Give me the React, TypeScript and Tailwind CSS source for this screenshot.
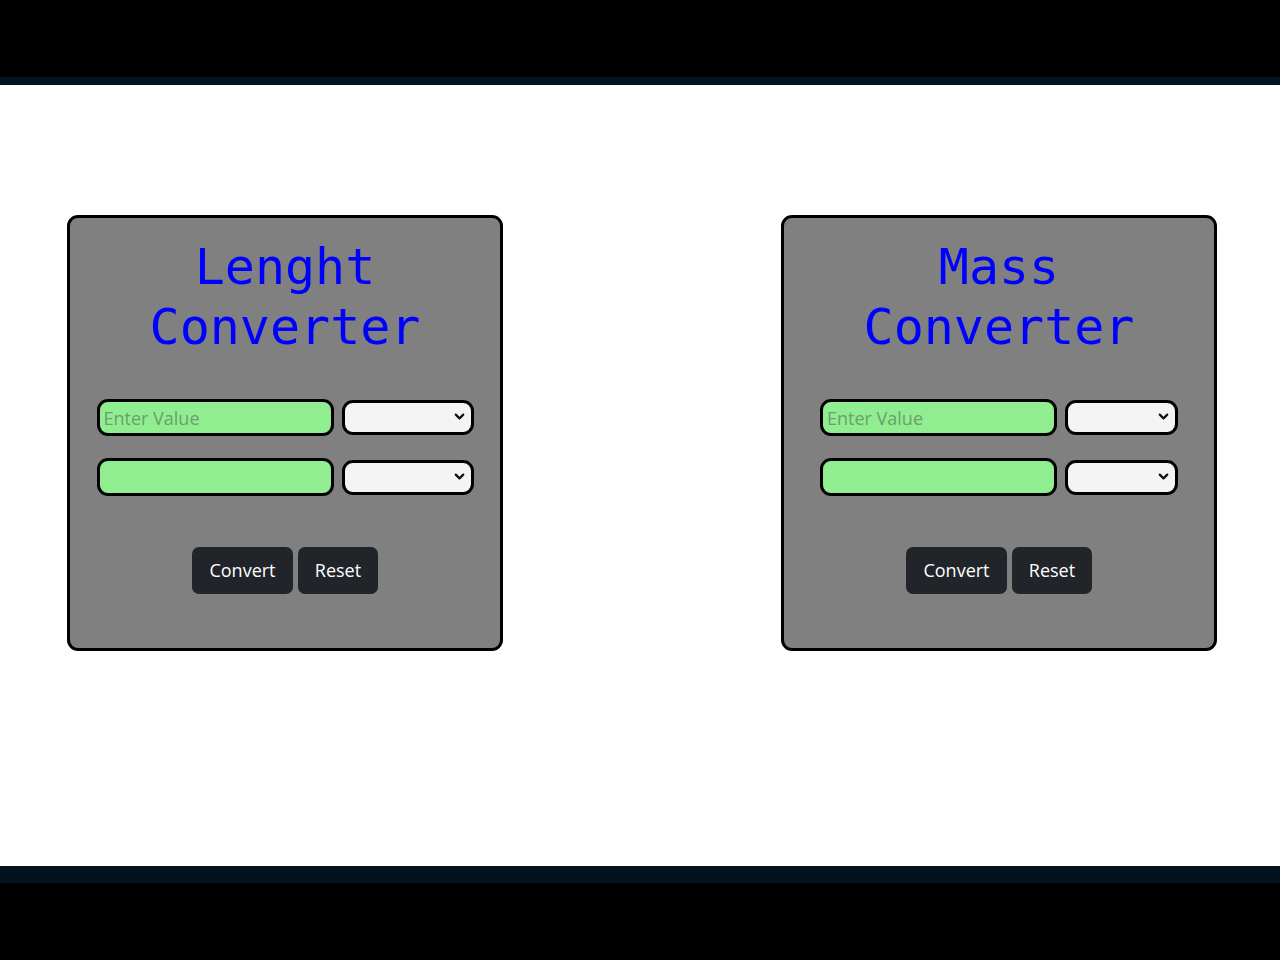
import React from 'react';
import { ChevronDown } from 'lucide-react';

const UnitSelect: React.FC<{ width: string }> = ({ width }) => (
  <div className="relative">
    <select className={`appearance-none h-[35px] rounded-[11px] border-[3px] border-black bg-[#f4f4f4] outline-none ${width}`}></select>
    <ChevronDown
      className="absolute right-[7px] top-[9px] w-[15px] h-[15px] text-[#111] pointer-events-none"
      strokeWidth={3.5}
    />
  </div>
);

const Converter: React.FC<{ title: string; selectWidth: string }> = ({ title, selectWidth }) => {
  return (
    <div className="w-[436px] h-[436px] rounded-[11px] border-[3px] border-black bg-[#808080] flex flex-col items-center">
      <h1 className="mt-[19px] text-center text-[#0000ff] text-[50px] leading-[60px] font-['DejaVu_Sans_Mono',monospace] w-[300px]">
        {title} Converter
      </h1>

      <div className="mt-[42px] flex flex-col gap-[22px]">
        <div className="flex items-center gap-[8px]">
          <input
            type="text"
            placeholder="Enter Value"
            className="w-[237px] h-[37px] rounded-[11px] border-[3px] border-black bg-[#90ee90] px-[4px] text-[18px] font-['Open_Sans',sans-serif] placeholder:text-[#6b9f6b] outline-none"
          />
          <UnitSelect width={selectWidth} />
        </div>
        <div className="flex items-center gap-[8px]">
          <input
            type="text"
            readOnly
            className="w-[237px] h-[38px] rounded-[11px] border-[3px] border-black bg-[#90ee90] px-[4px] text-[18px] outline-none"
          />
          <UnitSelect width={selectWidth} />
        </div>
      </div>

      <div className="mt-[51px] flex gap-[5px] font-['Open_Sans',sans-serif] text-[18px] text-white">
        <button className="h-[47px] w-[101px] rounded-[7px] bg-[#212529]">Convert</button>
        <button className="h-[47px] w-[80px] rounded-[7px] bg-[#212529]">Reset</button>
      </div>
    </div>
  );
};

const App: React.FC = () => {
  return (
    <div className="w-[1280px] h-[960px] flex flex-col bg-white">
      <div className="h-[77px] bg-black"></div>
      <div className="h-[8px] bg-[#03121f]"></div>
      <main className="flex-1 flex justify-between items-start pt-[130px] pl-[67px] pr-[63px]">
        <Converter title="Lenght" selectWidth="w-[132px]" />
        <Converter title="Mass" selectWidth="w-[113px]" />
      </main>
      <div className="h-[17px] bg-[#03121f]"></div>
      <div className="h-[77px] bg-black"></div>
    </div>
  );
};

export default App;
